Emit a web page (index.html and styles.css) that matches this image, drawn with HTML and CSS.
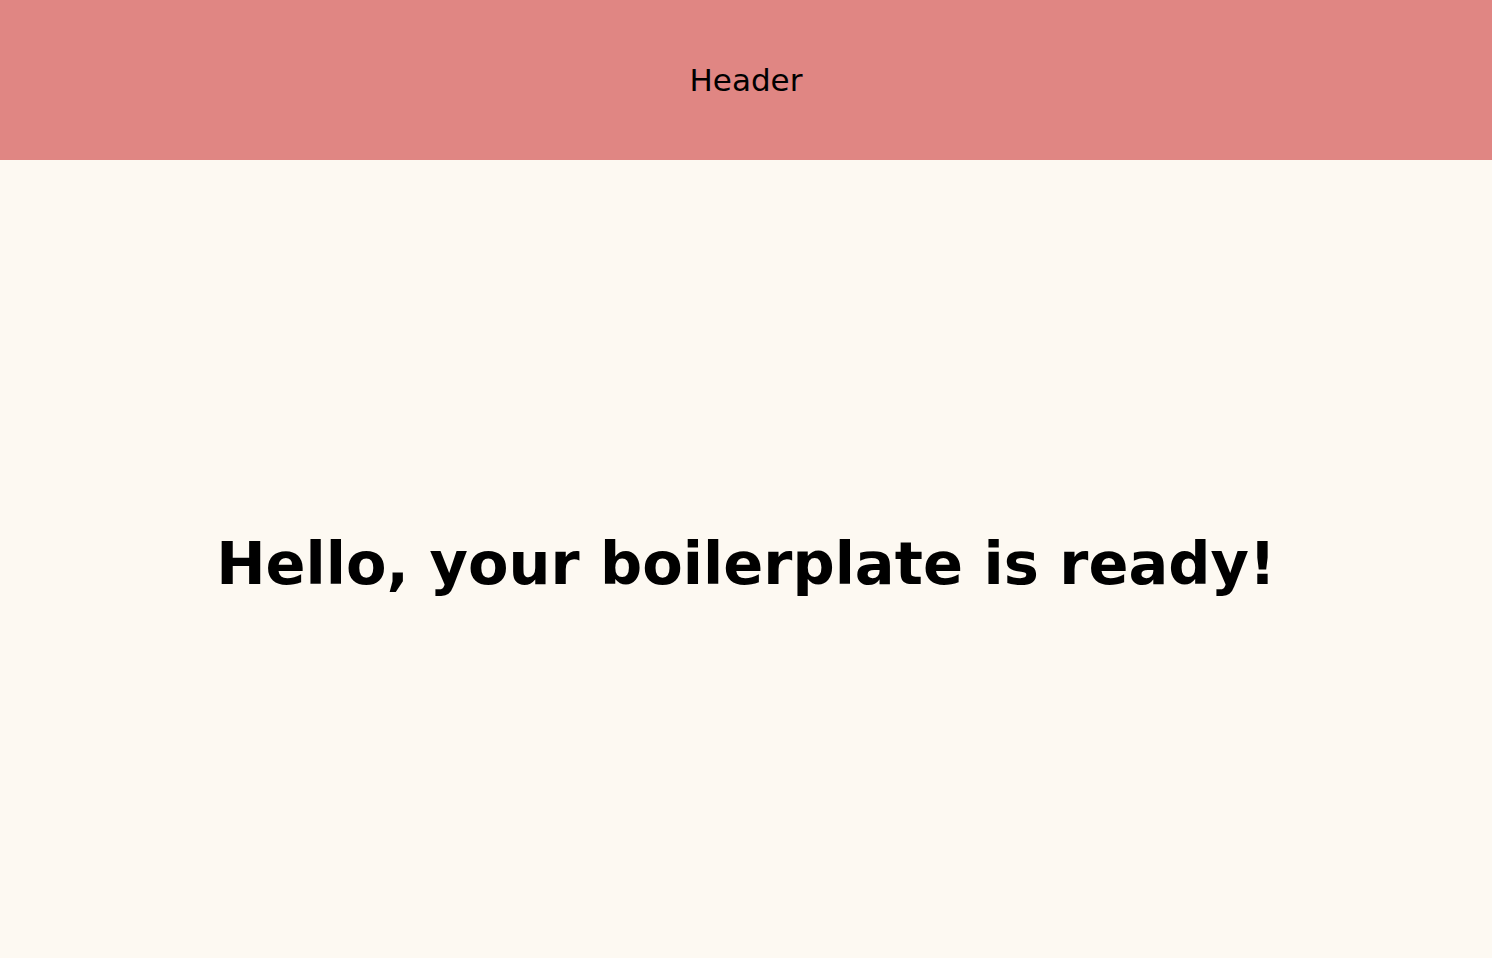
FILE: index.html
```html
<!DOCTYPE html>
<html>
<head>
<meta charset="utf-8">
<link rel="stylesheet" href="styles.css">
</head>
<body>
<header class="header">Header</header>
<main class="main">
<h1 class="title">Hello, your boilerplate is ready!</h1>
</main>
</body>
</html>
```
FILE: styles.css
```css
html, body {
  margin: 0;
  padding: 0;
  height: 100%;
}
body {
  font-family: "DejaVu Sans", Verdana, sans-serif;
  background: #fdf9f2;
  color: #000;
  display: flex;
  flex-direction: column;
}
.header {
  height: 160px;
  flex: none;
  background: #e08683;
  display: flex;
  align-items: center;
  justify-content: center;
  font-size: 31px;
}
.main {
  flex: 1;
  display: flex;
  align-items: center;
  justify-content: center;
  padding-top: 8px;
}
.title {
  margin: 0;
  font-size: 59px;
  font-weight: bold;
}
```
